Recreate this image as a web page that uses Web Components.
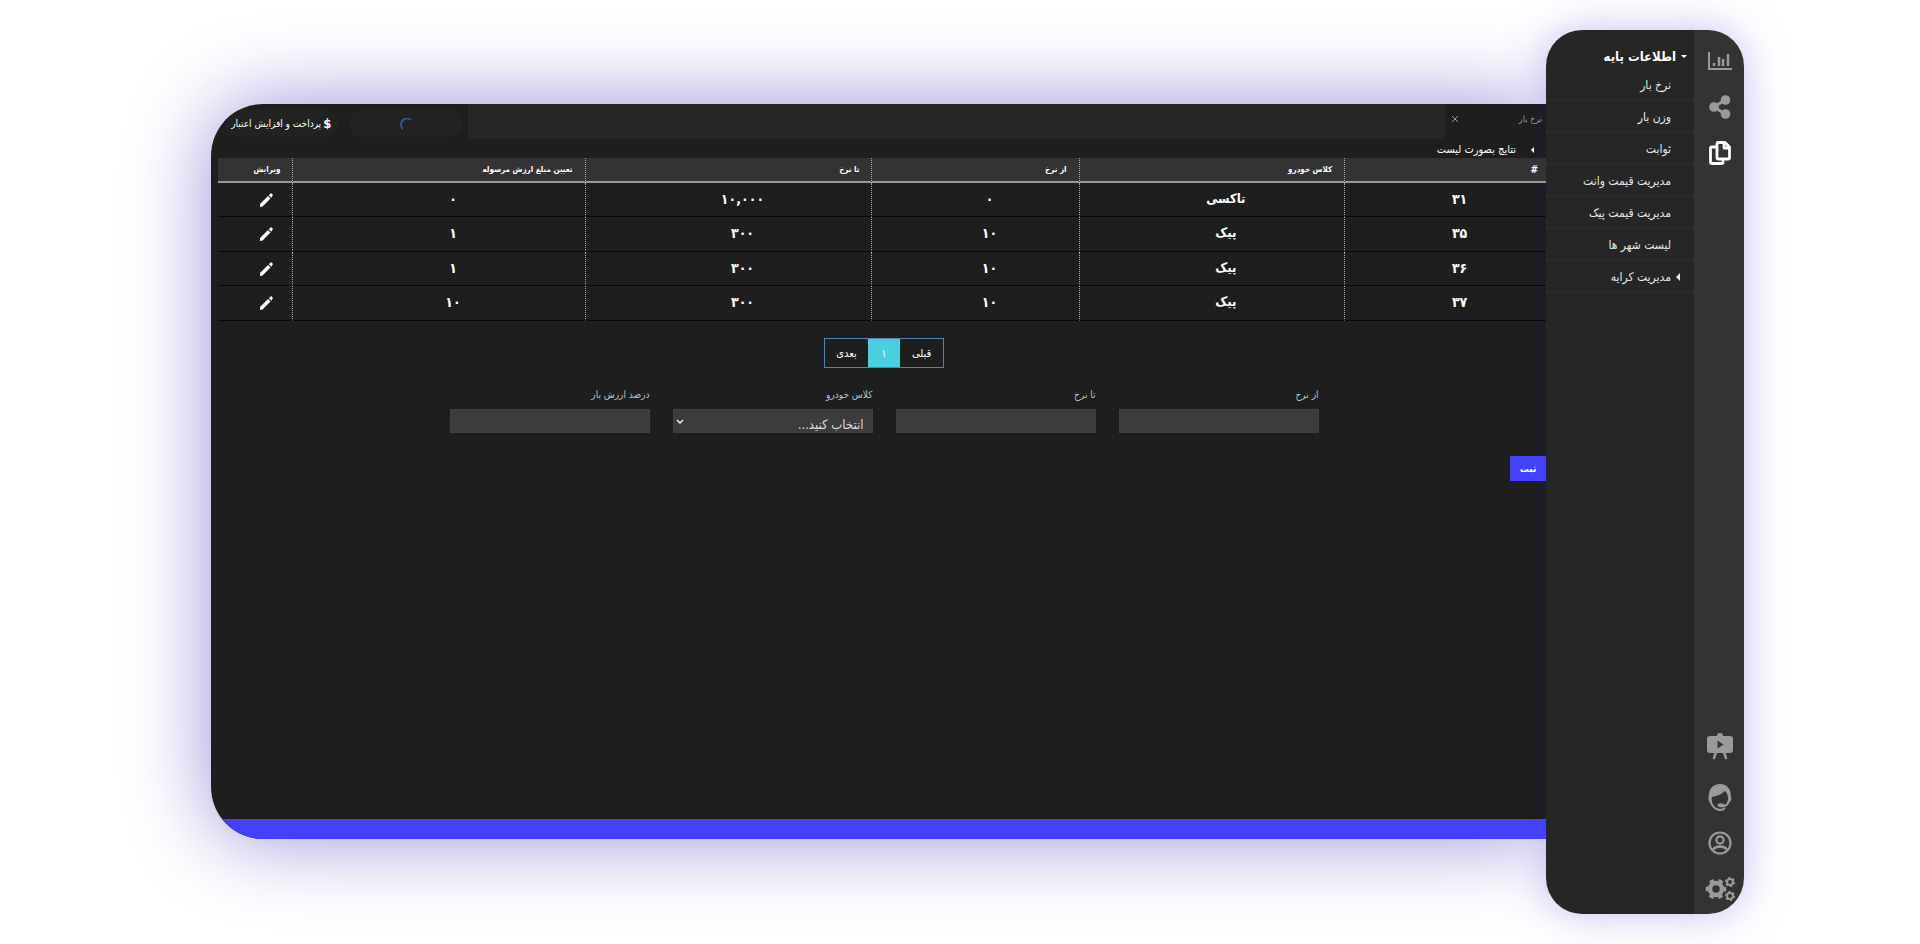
<!DOCTYPE html>
<html lang="fa" dir="rtl">
<head>
<meta charset="utf-8">
<title>نرخ بار</title>
<style>
  html { background: #fff; }
  body { margin: 0; font-family: "DejaVu Sans Condensed", "DejaVu Sans", sans-serif; font-size: 11px; color: #fff; }
</style>
</head>
<body>
<freight-app></freight-app>
<script>
const define = (name, html, setup) => {
  const template = document.createElement('template');
  template.innerHTML = html;
  customElements.define(name, class extends HTMLElement {
    constructor() {
      super();
      this.attachShadow({ mode: 'open' }).append(template.content.cloneNode(true));
    }
    connectedCallback() { if (setup) setup(this, this.shadowRoot); }
  });
};

/* Icon button of the side rail */
define('rail-button', `
<style>
  :host { display: block; color: #9a9a9a; }
  :host([active]) { color: #fff; }
  button { display: grid; place-items: center; width: 50px; height: 46px; margin: 0; padding: 0 0 0 2px; border: 0; background: none; color: inherit; }
  :host([spaced]) button { height: 58px; }
  ::slotted(svg) { display: block; }
</style>
<button type="button"><slot></slot></button>`,
(host, root) => root.querySelector('button').setAttribute('aria-label', host.getAttribute('label')));

define('icon-rail', `
<style>
  :host { display: flex; flex-direction: column; justify-content: space-between; width: 50px; padding: 8px 0 2px; box-sizing: border-box; background: #333; }
  svg { overflow: visible; }
</style>
<nav>
  <rail-button label="گزارش">
    <svg width="24" height="18" viewBox="0 0 24 18" fill="none" stroke="currentColor" stroke-width="2"><path d="M1 0v17h23"/><path d="M6 14v-3M11 14V5M15 14V7M20 14V2" stroke-width="2.500"/></svg>
  </rail-button>
  <rail-button label="اشتراک">
    <svg width="22" height="24" viewBox="0 0 22 24" fill="currentColor"><path d="M5 12 16 5M5 12l11 7" stroke="currentColor" stroke-width="3"/><circle cx="5" cy="12" r="4.800"/><circle cx="16.500" cy="5" r="4.800"/><circle cx="16.500" cy="19" r="4.800"/></svg>
  </rail-button>
  <rail-button label="اسناد" active>
    <svg width="22" height="24" viewBox="0 0 22 24" fill="none" stroke="currentColor" stroke-width="2.800" stroke-linejoin="round"><path d="M9 1.500h7l4.500 4.500V17a1 1 0 0 1-1 1H9a1 1 0 0 1-1-1V2.500a1 1 0 0 1 1-1zM15 2v5h5M7 6H2.500a1 1 0 0 0-1 1v14.500a1 1 0 0 0 1 1H13a1 1 0 0 0 1-1V19"/></svg>
  </rail-button>
</nav>
<nav>
  <rail-button label="آموزش" spaced>
    <svg width="26" height="27" viewBox="0 0 26 27"><path d="M9 20l-2 6M17 20l2 6" stroke="currentColor" stroke-width="2.500" stroke-linecap="round"/><path fill="currentColor" fill-rule="evenodd" d="M10 4a3 3 0 0 1 6 0h7a3 3 0 0 1 3 3v11a3 3 0 0 1-3 3H3a3 3 0 0 1-3-3V7a3 3 0 0 1 3-3zM10.500 8.500v8l6-4z"/></svg>
  </rail-button>
  <rail-button label="پشتیبانی">
    <svg width="24" height="27" viewBox="0 0 24 27"><path fill="currentColor" d="M12 0C5 0 1 5 1 11c-1 3-1 5 1 7l2 1c0-2-1-4 0-6 6-1 10-3 13-6 2 2 3 4 3 8v3h2c1-1 2-3 1-5C23 5 19 0 12 0z"/><path d="M2 16c1 5 5 10 10 10 2 0 4-1 5-2M11 22c5 1 9 0 10-6" fill="none" stroke="currentColor" stroke-width="2"/><path d="M11 21h4" stroke="currentColor" stroke-width="3" stroke-linecap="round"/></svg>
  </rail-button>
  <rail-button label="حساب کاربری">
    <svg width="24" height="24" viewBox="0 0 24 24" fill="none" stroke="currentColor" stroke-width="2.200"><circle cx="12" cy="12" r="10.500"/><circle cx="12" cy="9" r="3.600"/><path d="M5 18.500c3-4 11-4 14 0" stroke-width="2.500"/></svg>
  </rail-button>
  <rail-button label="تنظیمات">
    <svg width="29" height="24" viewBox="0 0 29 24" fill="none" stroke="currentColor"><circle cx="10" cy="12" r="6" stroke-width="4.500"/><circle cx="10" cy="12" r="8.800" stroke-width="3" stroke-dasharray="4.600 4.610" stroke-dashoffset="2.300"/><circle cx="24" cy="5" r="3" stroke-width="2"/><circle cx="24" cy="5" r="4.300" stroke-width="1.500" stroke-dasharray="2.200 2.300"/><circle cx="24" cy="19" r="3" stroke-width="2"/><circle cx="24" cy="19" r="4.300" stroke-width="1.500" stroke-dasharray="2.200 2.300"/></svg>
  </rail-button>
</nav>`);

define('menu-item', `
<style>
  :host { display: block; border-bottom: 1px dashed #333; }
  a { display: flex; align-items: center; height: 31px; padding-right: 23px; color: #e6e6e6; font-size: 12px; text-decoration: none; }
  :host([parent]) a { padding-right: 14px; gap: 5px; }
  i { display: none; border: 4px solid transparent; border-left: 0; border-right: 4px solid #e6e6e6; }
  :host([parent]) i { display: block; }
</style>
<a href="#"><i></i><slot></slot></a>`);

define('side-menu', `
<style>
  :host { display: block; flex: 1; padding-top: 14px; background: #262626; }
  button { display: flex; align-items: center; gap: 5px; height: 25px; margin: 0; padding: 0 7px; border: 0; background: none; color: #fff; font: bold 13px "DejaVu Sans Condensed", "DejaVu Sans", sans-serif; }
  i { border: 3px solid transparent; border-top-color: #fff; border-bottom: 0; }
</style>
<button type="button"><i></i>اطلاعات پایه</button>
<nav>
  <menu-item>نرخ بار</menu-item>
  <menu-item>وزن بار</menu-item>
  <menu-item>ثوابت</menu-item>
  <menu-item>مدیریت قیمت وانت</menu-item>
  <menu-item>مدیریت قیمت پیک</menu-item>
  <menu-item>لیست شهر ها</menu-item>
  <menu-item parent>مدیریت کرایه</menu-item>
</nav>`);

define('side-bar', `
<style>
  :host { display: flex; overflow: hidden; border-radius: 36px; }
</style>
<icon-rail></icon-rail>
<side-menu></side-menu>`);

define('top-bar', `
<style>
  :host { display: flex; height: 35px; }
  .tab { display: flex; align-items: center; justify-content: space-between; width: 101px; box-sizing: border-box; padding: 0 4px 6px 6px; color: #999; font-size: 9px; }
  button { margin: 0; padding: 0; border: 0; background: none; color: inherit; font-family: inherit; font-size: 10px; }
  svg { display: block; }
  .space { flex: 1; background: #262626; }
  .pills { display: flex; align-items: center; gap: 10px; width: 257px; box-sizing: border-box; padding: 4px 5px 0 13px; }
  .pill { display: flex; align-items: center; justify-content: center; gap: 2px; flex: 1; height: 27px; border-radius: 14px; background: #222; white-space: nowrap; }
  .credit { color: #fff; }
  .credit b { font-size: 13px; }
</style>
<div class="tab"><span>نرخ بار</span><button type="button" aria-label="بستن"><svg width="8" height="8" viewBox="0 0 8 8" stroke="currentColor"><path d="M1 1l6 6M7 1 1 7"/></svg></button></div>
<div class="space"></div>
<div class="pills">
  <div class="pill"><svg width="12" height="12" viewBox="0 0 12 12" fill="none" stroke="#31588a" stroke-width="2"><path d="M3 11A5 5 0 0 1 11 2"/></svg></div>
  <button type="button" class="pill credit"><b>$</b>پرداخت و افزایش اعتبار</button>
</div>`);

define('rate-table', `
<style>
  :host { display: block; }
  .caption { display: flex; align-items: center; gap: 15px; height: 17px; padding: 2px 12px 0; }
  .caption i { border: 3px solid transparent; border-left: 0; border-right: 3px solid #fff; }
  table { width: 100%; border-collapse: separate; border-spacing: 0; table-layout: fixed; }
  th, td { box-sizing: content-box; }
  th { height: 23px; padding: 0 12px; border-bottom: 2px solid #999; background: #333; text-align: start; font-size: 8px; line-height: 16px; white-space: nowrap; }
  th:first-child { padding-right: 8px; font-size: 10px; }
  td { height: 31px; padding: 0 0 2px 28px; border-bottom: 1px solid #080808; text-align: center; font-size: 14px; font-weight: bold; line-height: 20px; }
  tr:nth-child(even) td { height: 32px; }
  th:not(:last-child), td:not(:last-child) { border-left: 1px dotted #aaa; }
  td:last-child { padding: 0 19px 0 0; }
  td:nth-child(2) { font-size: 13px; }
  button { display: block; margin: 0; padding: 0; border: 0; background: none; color: #fff; }
  svg { display: block; }
</style>
<div class="caption"><i></i><span>نتایج بصورت لیست</span></div>
<table>
  <colgroup><col style="width:15.2%"><col style="width:20%"><col style="width:15.6%"><col style="width:21.6%"><col style="width:22%"><col style="width:5.6%"></colgroup>
  <thead><tr><th>#</th><th>کلاس خودرو</th><th>از نرخ</th><th>تا نرخ</th><th>تعیین مبلغ ارزش مرسوله</th><th>ویرایش</th></tr></thead>
  <tbody></tbody>
</table>`,
(host, root) => {
  const rows = [
    ['۳۱', 'تاکسی', '۰', '۱۰,۰۰۰', '۰'],
    ['۳۵', 'پیک', '۱۰', '۳۰۰', '۱'],
    ['۳۶', 'پیک', '۱۰', '۳۰۰', '۱'],
    ['۳۷', 'پیک', '۱۰', '۳۰۰', '۱۰'],
  ];
  const pencil = '<button type="button" aria-label="ویرایش"><svg width="13" height="14" viewBox="0 0 13 14" fill="#fff"><path d="M0 14v-3l8-8 2.500 2.500-8 8zM8.800 2.200 11 0l2 2-1.700 2.700z"/></svg></button>';
  root.querySelector('tbody').innerHTML = rows.map(r =>
    '<tr>' + r.map(c => `<td>${c}</td>`).join('') + `<td>${pencil}</td></tr>`).join('');
});

define('page-switch', `
<style>
  :host { display: flex; justify-content: center; }
  nav { display: flex; border: 1px solid #4a86b4; }
  a { display: grid; place-items: center; width: 43px; height: 28px; color: #fff; font-size: 11px; text-decoration: none; }
  .current { width: 32px; background: #48cfe0; }
</style>
<nav><a href="#">قبلی</a><a href="#" class="current" aria-current="page">۱</a><a href="#">بعدی</a></nav>`);

define('rate-form', `
<style>
  :host { display: block; }
  .fields { display: grid; grid-template-columns: repeat(4, 200px); justify-content: center; gap: 23px; }
  label { display: block; height: 25px; line-height: 22px; color: #b9c2ca; font-size: 10px; }
  input, select { display: block; width: 100%; height: 24px; box-sizing: border-box; margin: 0; border: 1px solid #404040; border-radius: 0; background: #3c3c3c; color: #ddd; font-family: inherit; font-size: 13px; }
  select { appearance: none; padding: 8px 8px 0; line-height: 14px; }
  .pick { position: relative; }
  .pick svg { position: absolute; left: 3px; top: 10px; pointer-events: none; }
  button { display: block; width: 36px; height: 25px; margin: 23px 0 0; padding: 0; border: 0; background: #4340ff; color: #fff; font-family: inherit; font-size: 10px; font-weight: bold; }
</style>
<form>
  <div class="fields">
    <div><label for="from">از نرخ</label><input id="from"></div>
    <div><label for="to">تا نرخ</label><input id="to"></div>
    <div><label for="class">کلاس خودرو</label><div class="pick"><select id="class"><option>انتخاب کنید...</option></select><svg width="8" height="6" viewBox="0 0 8 6" fill="none" stroke="#eee" stroke-width="1.500"><path d="M1 1l3 3 3-3"/></svg></div></div>
    <div><label for="percent">درصد ارزش بار</label><input id="percent"></div>
  </div>
  <button type="button">ثبت</button>
</form>`);

define('main-panel', `
<style>
  :host { display: flex; flex-direction: column; overflow: hidden; border-radius: 52px 0 0 52px; background: linear-gradient(to left, #1d1d28 10px, #1e1e1e 10px); box-shadow: 0 0 84px #9891d8; }
  main { flex: 1; padding-left: 7px; }
  .controls { padding-left: 4px; }
  page-switch { margin: 17px 0 16px; }
  .foot { height: 20px; background: #4340ff; }
</style>
<top-bar></top-bar>
<main>
  <rate-table></rate-table>
  <div class="controls">
    <page-switch></page-switch>
    <rate-form></rate-form>
  </div>
</main>
<div class="foot"></div>`);

define('freight-app', `
<style>
  :host { display: grid; grid-template-columns: 198px 1fr; min-height: 100vh; box-sizing: border-box; padding: 30px 176px 30px 211px; }
  .halo, side-bar { grid-area: 1 / 1; }
  .halo { border-radius: 36px; box-shadow: 0 0 40px #8f89e08c; }
  main-panel { grid-area: 1 / 2; margin: 74px 0 75px; }
</style>
<div class="halo"></div>
<main-panel></main-panel>
<side-bar></side-bar>`);
</script>
</body>
</html>
